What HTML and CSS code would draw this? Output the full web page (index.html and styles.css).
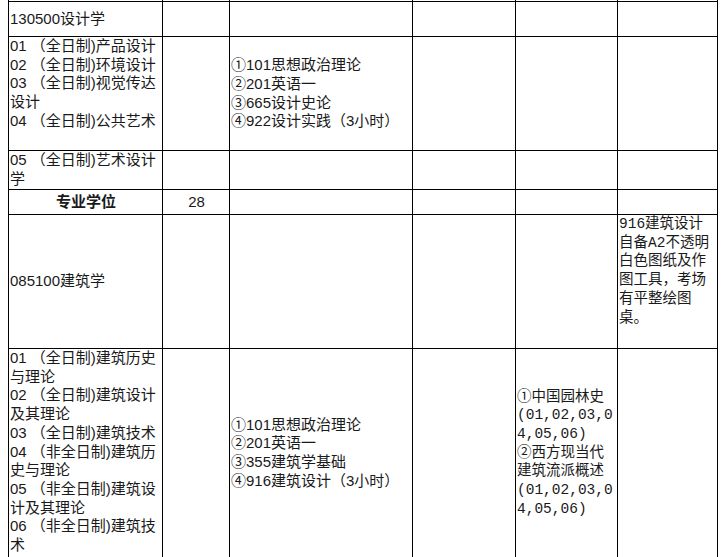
FILE: index.html
```html
<!DOCTYPE html>
<html lang="zh-CN">
<head>
<meta charset="utf-8">
<title>招生专业目录</title>
<link rel="stylesheet" href="styles.css">
</head>
<body>
<table class="plan">
  <colgroup>
    <col class="c1"><col class="c2"><col class="c3"><col class="c4"><col class="c5"><col class="c6">
  </colgroup>
  <tr class="r0"><td></td><td></td><td></td><td></td><td></td><td></td></tr>
  <tr class="r1"><td>130500设计学</td><td></td><td></td><td></td><td></td><td></td></tr>
  <tr class="r2">
    <td class="top">01 （全日制)产品设计<br>02 （全日制)环境设计<br>03 （全日制)视觉传达设计<br>04 （全日制)公共艺术</td>
    <td></td>
    <td>①101思想政治理论<br>②201英语一<br>③665设计史论<br>④922设计实践（3小时）</td>
    <td></td><td></td><td></td>
  </tr>
  <tr class="r3"><td>05 （全日制)艺术设计学</td><td></td><td></td><td></td><td></td><td></td></tr>
  <tr class="r4"><td class="head">专业学位</td><td class="num">28</td><td></td><td></td><td></td><td></td></tr>
  <tr class="r5">
    <td>085100建筑学</td><td></td><td></td><td></td><td></td>
    <td class="top note">916建筑设计自备A2不透明白色图纸及作图工具，考场有平整绘图桌。</td>
  </tr>
  <tr class="r6">
    <td class="top">01 （全日制)建筑历史与理论<br>02 （全日制)建筑设计及其理论<br>03 （全日制)建筑技术<br>04 （非全日制)建筑历史与理论<br>05 （非全日制)建筑设计及其理论<br>06 （非全日制)建筑技术</td>
    <td></td>
    <td>①101思想政治理论<br>②201英语一<br>③355建筑学基础<br>④916建筑设计（3小时）</td>
    <td></td>
    <td class="note">①中国园林史(01,02,03,04,05,06)<br>②西方现当代建筑流派概述(01,02,03,04,05,06)</td>
    <td></td>
  </tr>
</table>
</body>
</html>
```

FILE: styles.css
```css
html, body {
  background: #fff;
}
body {
  margin: 0 0 0 8px;
}
.plan {
  border-collapse: collapse;
  table-layout: fixed;
  width: 710px;
  margin-top: -20px;
  font-family: "Liberation Sans", "Noto Sans CJK SC", sans-serif;
  font-size: 15px;
  line-height: 18.7px;
  color: #1a1a1a;
}
.c1 { width: 154px; }
.c2 { width: 67px; }
.c3 { width: 183px; }
.c4 { width: 103px; }
.c5 { width: 102px; }
.c6 { width: 100px; }
.plan td {
  border: 1px solid #000;
  padding: 0 0 0 1px;
  vertical-align: middle;
  overflow: hidden;
}
.plan td.top {
  vertical-align: top;
}
.plan td.note {
  font-family: "Liberation Mono", "Noto Sans CJK SC", monospace;
  font-size: 14.5px;
  word-break: break-all;
}
.plan td.head {
  font-weight: bold;
  text-align: center;
}
.plan td.num {
  text-align: center;
}
.r0 { height: 21px; }
.r1 { height: 35px; }
.r2 { height: 114px; }
.r3 { height: 39px; }
.r4 { height: 25px; }
.r5 { height: 134px; }
.r6 { height: 209px; }
```
